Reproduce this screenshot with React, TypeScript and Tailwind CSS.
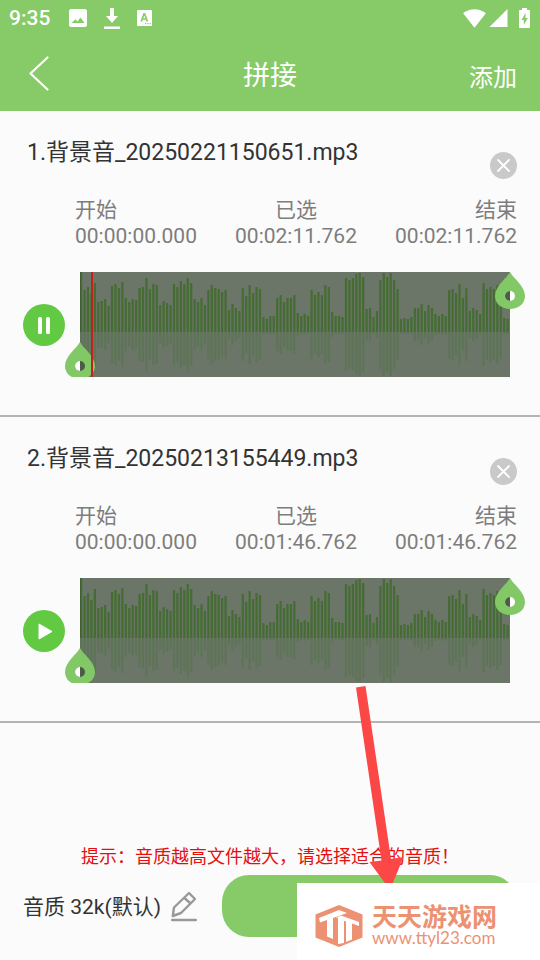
const LEVELS = [
  60, 42, 45, 38, 49, 30, 31, 33, 26, 46, 48, 44, 50, 34, 30, 33, 32, 44, 45, 54, 43, 48, 47, 27, 31,
  29, 27, 48, 45, 51, 48, 54, 49, 33, 30, 34, 27, 42, 47, 44, 43, 40, 42, 22, 28, 24, 21, 44, 36, 47,
  39, 45, 43, 15, 13, 16, 16, 34, 37, 30, 34, 34, 37, 19, 16, 18, 16, 42, 37, 40, 37, 47, 45, 20, 16,
  16, 15, 54, 52, 54, 58, 59, 55, 23, 24, 15, 21, 52, 59, 55, 59, 52, 43, 13, 14, 13, 15, 24, 24, 28,
  21, 27, 24, 18, 16, 18, 16, 42, 43, 39, 48, 34, 44, 21, 24, 22, 18, 49, 43, 45, 43, 47, 42, 14, 13,
];

type Track = {
  id: number;
  name: string;
  start: string;
  selected: string;
  end: string;
  playing: boolean;
};

const TRACKS: Track[] = [
  {
    id: 1,
    name: "背景音_20250221150651.mp3",
    start: "00:00:00.000",
    selected: "00:02:11.762",
    end: "00:02:11.762",
    playing: true,
  },
  {
    id: 2,
    name: "背景音_20250213155449.mp3",
    start: "00:00:00.000",
    selected: "00:01:46.762",
    end: "00:01:46.762",
    playing: false,
  },
];

function StatusBar() {
  return (
    <div className="flex h-9 items-center justify-between pl-[9px] pr-[9px] text-white">
      <div className="flex items-center">
        <span className="text-[21px] font-medium leading-6">9:35</span>
        <svg className="ml-[19px] h-[18px] w-[18px]" viewBox="0 0 18 18" fill="currentColor">
          <path
            fillRule="evenodd"
            d="M2 0h14a2 2 0 0 1 2 2v14a2 2 0 0 1-2 2H2a2 2 0 0 1-2-2V2a2 2 0 0 1 2-2zM2.500 14h13l-4-5.400-3 4-2-2.400z"
          />
        </svg>
        <svg className="ml-[17px] h-[21px] w-4" viewBox="0 0 16 21" fill="currentColor">
          <path d="M6 0h4v8h4l-6 7-6-7h4zM0 18.500h16V21H0z" />
        </svg>
        <svg className="ml-[17px] h-4 w-[15px]" viewBox="0 0 15 16" fill="currentColor">
          <path
            fillRule="evenodd"
            d="M1 0h13a1 1 0 0 1 1 1v14a1 1 0 0 1-1 1H1a1 1 0 0 1-1-1V1a1 1 0 0 1 1-1zM6.400 3 3.400 11.500h1.800l.6-1.800h3l.6 1.800h1.800L8.200 3zM7.300 5.200l1 3h-2zM8 13v1.200h1.200V13zM10.300 13v1.200h1.200V13zM12.600 13v1.200h1.200V13z"
          />
        </svg>
      </div>
      <div className="flex items-center">
        <svg className="h-[19px] w-[23px]" viewBox="0.3 2.8 23.4 19" preserveAspectRatio="none" fill="currentColor">
          <path d="M12 21.500 23.600 7C23.200 6.700 18.700 3 12 3S.8 6.700.4 7z" />
        </svg>
        <svg className="ml-[3px] h-[18px] w-[19px]" viewBox="0 0 19 18" fill="currentColor">
          <path d="M18.500 0v18H.5z" />
        </svg>
        <svg className="ml-[11px] mr-px h-5 w-[11px]" viewBox="0 0 11 20" fill="currentColor">
          <path
            fillRule="evenodd"
            d="M3 0h5v2h2a1 1 0 0 1 1 1v16a1 1 0 0 1-1 1H1a1 1 0 0 1-1-1V3a1 1 0 0 1 1-1h2zM6.500 5 2.500 12h2.300v5l4-7H6.500z"
          />
        </svg>
      </div>
    </div>
  );
}

function Handle({ side }: { side: "left" | "right" }) {
  return (
    <svg className="block h-[37px] w-[30px]" viewBox="0 0 30 37">
      <path d="M15 0C18 6 30 14 30 24 30 32 23 37 15 37S0 32 0 24C0 14 12 6 15 0z" fill="#82c866" />
      <circle cx="15" cy="24" r="5" fill={side === "left" ? "#4d5b47" : "#ffffff"} />
      <path d="M15 19a5 5 0 0 0 0 10z" fill={side === "left" ? "#ffffff" : "#4d5b47"} />
    </svg>
  );
}

function Waveform({ playing }: { playing: boolean }) {
  return (
    <div className="relative h-[105px] flex-1 bg-[#6b7669]">
      <svg className="block h-full w-full" viewBox="0 0 430 105" preserveAspectRatio="none">
        {LEVELS.map((level, i) => (
          <g key={i}>
            <rect x={i * 3.44} y={60 - level} width="2.2" height={level} fill="#456c32" />
            <rect x={i * 3.44} y={60} width="2.2" height={Math.max(level - 15, 2)} fill="#5e7457" />
          </g>
        ))}
        <rect x="0" y="0" width="1" height="60" fill="#3f6330" />
      </svg>
      <div className="absolute -left-[15px] top-[70px] h-[35px] overflow-hidden">
        <Handle side="left" />
      </div>
      <div className="absolute -right-[15px] top-0">
        <Handle side="right" />
      </div>
      {playing && <div className="absolute left-[11px] top-0 h-full w-[2px] bg-[#c4211c]" />}
    </div>
  );
}

function TrackCard({ track }: { track: Track }) {
  const times = [
    { label: "开始", value: track.start, align: "text-left" },
    { label: "已选", value: track.selected, align: "text-center" },
    { label: "结束", value: track.end, align: "text-right" },
  ];
  return (
    <section className="border-b-2 border-[#b4b4b4] pb-[38px] pt-[23px]">
      <div className="flex items-start justify-between pl-[27px] pr-[23px]">
        <h2 className="text-[23px] leading-[38px] text-[#333333]">
          {track.id}.{track.name}
        </h2>
        <button
          type="button"
          aria-label="删除"
          className="mt-[18px] flex h-[27px] w-[27px] items-center justify-center rounded-full bg-[#c9c9c9]"
        >
          <svg className="h-[13px] w-[13px]" viewBox="0 0 13 13" stroke="#fff" strokeWidth="1.800" strokeLinecap="round">
            <path d="M1 1l11 11M12 1 1 12" />
          </svg>
        </button>
      </div>
      <dl className="mt-[18px] flex justify-between pl-[75px] pr-[23px] text-[21px] leading-[26px] text-[#7d7d7d]">
        {times.map((t) => (
          <div key={t.label} className={t.align}>
            <dt>{t.label}</dt>
            <dd>{t.value}</dd>
          </div>
        ))}
      </dl>
      <div className="mt-[23px] flex items-center gap-[15px] pl-[23px] pr-[30px]">
        <button
          type="button"
          aria-label={track.playing ? "暂停" : "播放"}
          className="flex h-[42px] w-[42px] shrink-0 items-center justify-center rounded-full bg-[#61ca42]"
        >
          <svg className="h-[42px] w-[42px]" viewBox="0 0 42 42" fill="#fff">
            {track.playing ? (
              <>
                <rect x="15" y="13" width="4" height="17" rx="1.500" />
                <rect x="23" y="13" width="4" height="17" rx="1.500" />
              </>
            ) : (
              <path d="M16 14 29 21.500 16 29z" stroke="#fff" strokeWidth="1" strokeLinejoin="round" />
            )}
          </svg>
        </button>
        <Waveform playing={track.playing} />
      </div>
    </section>
  );
}

function Watermark() {
  return (
    <div className="absolute bottom-0 right-0 flex h-[77px] w-[243px] items-center bg-white pl-[18px] pt-2 text-[#ec9172]">
      <svg className="h-[42px] w-12 shrink-0" viewBox="0 0 48 42">
        <path d="M24 0 47.500 9.500v23L24 42 .5 32.500v-23z" fill="#ec9172" />
        <path d="M4 13 24 5l8 3-14 5v21l-6-2.500V15l-7 2.500z" fill="#fff" />
        <path d="M21 12.500 26 10.500 44 17v4l-7-2.500V34.500L31 37V16.500l-2-.7V38l-6 1V13z" fill="#fff" />
      </svg>
      <div className="ml-[9px]">
        <div className="text-[25px] font-bold leading-6">天天游戏网</div>
        <div className="font-['Lato',sans-serif] text-[17px] leading-4">www.ttyl23.com</div>
      </div>
    </div>
  );
}

export default function App() {
  return (
    <div className="relative flex min-h-screen flex-col overflow-hidden bg-[#fbfbfb] font-['Roboto','Noto_Sans_CJK_SC',sans-serif]">
      <header className="bg-[#87ca68] text-white">
        <StatusBar />
        <nav className="grid h-[75px] grid-cols-3 items-center pl-[23px] pr-[23px]">
          <button type="button" aria-label="返回" className="flex h-12 w-8 items-center justify-center">
            <svg className="h-[35px] w-5" viewBox="0 0 20 35" fill="none" stroke="#fff" strokeWidth="2.200" strokeLinecap="round" strokeLinejoin="round">
              <path d="M18.500 1.500 1.500 17.500l17 16" />
            </svg>
          </button>
          <h1 className="pt-1 text-center text-[27px] leading-9">拼接</h1>
          <button type="button" className="justify-self-end pt-2 text-2xl leading-9">
            添加
          </button>
        </nav>
      </header>

      <main className="flex-1">
        {TRACKS.map((track) => (
          <TrackCard key={track.id} track={track} />
        ))}
      </main>

      <footer className="pb-[23px]">
        <p className="text-center text-lg leading-6 text-[#e60f0f]">提示：音质越高文件越大，请选择适合的音质！</p>
        <div className="mt-1.5 flex items-center pl-[23px] pr-[23px]">
          <span className="whitespace-nowrap pt-0.5 text-[21px] leading-8 text-[#333333]">音质 32k(默认)</span>
          <button type="button" aria-label="编辑音质" className="ml-2.5">
            <svg className="block h-[31px] w-[26px]" viewBox="0 0 26 31" fill="none" stroke="#999" strokeWidth="2.400" strokeLinejoin="round">
              <path d="M18 2 24 8 10 22 1.800 25 3 16.500zM13.500 7l6 5.500" />
              <path d="M1.300 29h23.400" strokeWidth="2.600" strokeLinecap="round" />
            </svg>
          </button>
          <button type="button" aria-label="拼接" className="ml-[25px] h-[62px] flex-1 rounded-[27px] bg-[#87ca68]" />
        </div>
      </footer>

      <svg className="pointer-events-none absolute left-[355px] top-[685px] h-[206px] w-[50px]" viewBox="355 685 50 206">
        <path d="M356 687.500 365.500 686 391 859 403.500 857 390 890 369.500 862 381.500 860.500z" fill="#fb4847" />
      </svg>
      <Watermark />
    </div>
  );
}
